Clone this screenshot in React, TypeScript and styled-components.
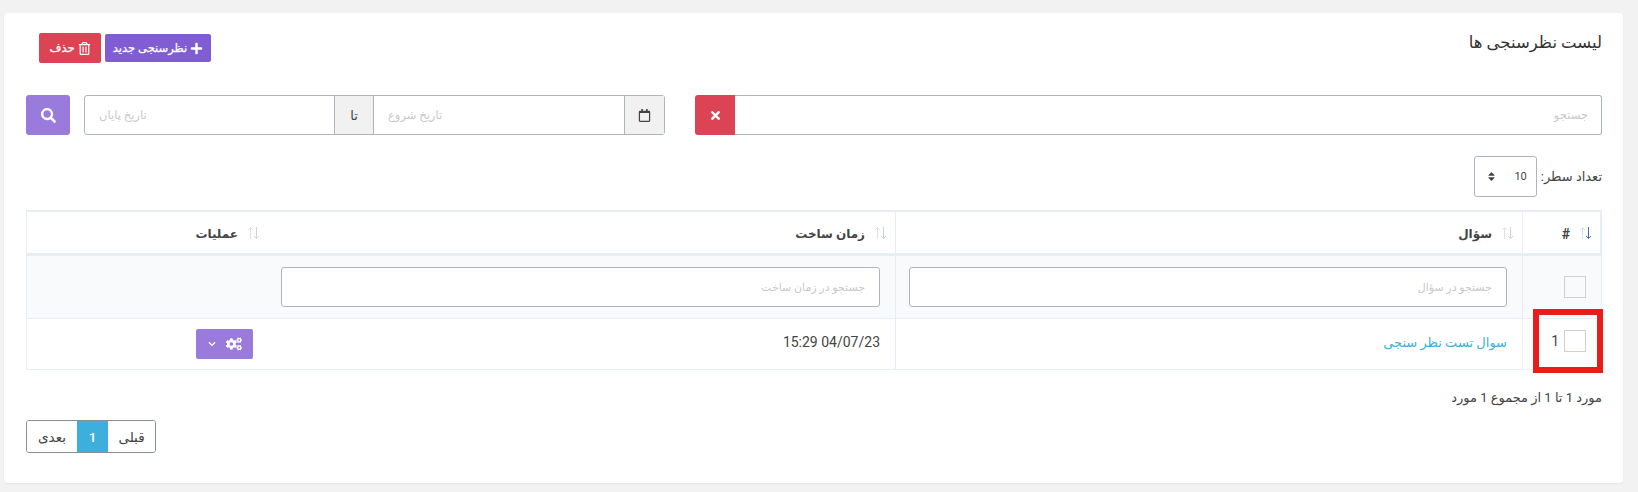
import React from "react";
import styled, { createGlobalStyle } from "styled-components";
import { FaPlus, FaRegTrashAlt, FaRegCalendar, FaSearch, FaTimes, FaCogs, FaChevronDown, FaSort } from "react-icons/fa";

const FONT = `Roboto, "DejaVu Sans", sans-serif`;

const Global = createGlobalStyle`
  html, body { margin: 0; padding: 0; background: #f2f2f2; }
  body { font-family: ${FONT}; color: #444; }
  * { box-sizing: border-box; }
  input::placeholder { color: #c9c9c9; opacity: 1; }
`;

const Page = styled.div`
  direction: rtl;
  height: 492px;
  padding: 13px 15px 0 4px;
`;
const Card = styled.main`
  background: #fff;
  height: 470px;
  border-radius: 4px;
  padding: 20px 21px 0 22px;
  box-shadow: 0 1px 2px rgba(0, 0, 0, 0.06);
`;
const TitleRow = styled.header`
  display: flex;
  align-items: center;
  justify-content: space-between;
  height: 30px;
  padding-left: 13px;
`;
const Title = styled.h1`
  margin: 0 0 12px;
  font-size: 16.5px;
  font-weight: 400;
  color: #333;
`;
const Actions = styled.div`
  display: flex;
  align-items: center;
  gap: 4px;
`;
const ActionButton = styled.button<{ $bg: string; $h: number; $w: number }>`
  display: inline-flex;
  align-items: center;
  justify-content: center;
  gap: 3px;
  height: ${(p) => p.$h}px;
  width: ${(p) => p.$w}px;
  padding: 0;
  background: ${(p) => p.$bg};
  border: none;
  border-radius: 2px;
  color: #fff;
  font: 400 11.5px ${FONT};
  -webkit-text-stroke: 0.25px #fff;
`;
const FilterRow = styled.section`
  display: flex;
  margin-top: 32px;
  gap: 14px;
`;
const SearchGroup = styled.div`
  display: flex;
  flex: 0 0 907px;
  height: 40px;
  margin-left: 16px;
`;
const SearchInput = styled.input`
  flex: 1;
  min-width: 0;
  height: 40px;
  padding: 0 13px;
  border: 1px solid #adb5bd;
  border-left: none;
  border-radius: 0 3px 3px 0;
  font: 400 11.5px ${FONT};
  background: #fff;
`;
const ClearButton = styled.button`
  flex: 0 0 40px;
  display: flex;
  align-items: center;
  justify-content: center;
  padding: 0;
  border: none;
  border-radius: 3px 0 0 3px;
  background: #dc4455;
  color: #fff;
  font-size: 13px;
`;
const DateGroup = styled.div`
  display: flex;
  flex: 0 0 581px;
  height: 40px;
  border: 1px solid #adb5bd;
  border-radius: 3px;
`;
const Addon = styled.span<{ $w: number }>`
  flex: 0 0 ${(p) => p.$w}px;
  display: flex;
  align-items: center;
  justify-content: center;
  background: #f1f1f1;
  color: #444;
  font-size: 13px;
  border-left: 1px solid #adb5bd;
`;
const DateInput = styled.input`
  flex: 1;
  min-width: 0;
  padding: 0 14px;
  border: none;
  border-left: 1px solid #adb5bd;
  font: 400 11.5px ${FONT};
  text-align: left;
  background: transparent;
  &:first-of-type { flex: 0 0 251px; }
  &:last-child { border-left: none; }
`;
const SearchButton = styled.button`
  flex: 0 0 44px;
  height: 40px;
  display: flex;
  align-items: center;
  justify-content: center;
  padding: 0;
  border: none;
  border-radius: 3px;
  background: #9a7bdb;
  color: #fff;
  font-size: 15px;
`;
const PerPage = styled.div`
  display: flex;
  align-items: center;
  gap: 4px;
  margin-top: 21px;
  height: 41px;
  font-size: 13px;
  color: #444;
`;
const SelectBox = styled.div`
  width: 63px;
  height: 41px;
  display: flex;
  align-items: center;
  justify-content: space-between;
  padding: 0 9px 0 11px;
  border: 1px solid #adb5bd;
  border-radius: 3px;
  font: 400 11px Roboto, sans-serif;
`;
const Table = styled.table`
  margin-top: 13px;
  width: 100%;
  table-layout: fixed;
  border-collapse: separate;
  border-spacing: 0;
`;
const Head = styled.th<{ $end?: boolean; $open?: boolean }>`
  height: 46px;
  padding: 3px 8px 0 0;
  border-top: 2px solid #e6edf4;
  border-bottom: 3px solid #e6edf4;
  border-right: ${(p) => (p.$end ? "2px solid #e6edf4" : "none")};
  border-left: ${(p) => (p.$open ? "none" : "1px solid #e6edf4")};
  text-align: right;
  font-size: 12px;
  font-weight: 700;
  color: #444;
  vertical-align: middle;
`;
const HeadInner = styled.span`
  display: inline-flex;
  align-items: center;
  gap: 9px;
  svg { margin-bottom: 3px; }
`;
const HashMark = styled.span`
  font-size: 14px;
`;
const FilterCell = styled.td<{ $end?: boolean; $open?: boolean }>`
  height: 63px;
  padding: 0 15px 0 13px;
  background: #f9fafc;
  border-bottom: 1px solid #e6edf4;
  border-right: ${(p) => (p.$end ? "1px solid #e6edf4" : "none")};
  border-left: ${(p) => (p.$open ? "none" : "1px solid #e6edf4")};
`;
const FilterInput = styled.input`
  display: block;
  width: 100%;
  height: 40px;
  padding: 0 14px;
  border: 1px solid #adb5bd;
  border-radius: 3px;
  background: #fff;
  font: 400 11px ${FONT};
`;
const Cell = styled.td<{ $end?: boolean; $open?: boolean; $lift?: number }>`
  position: relative;
  height: 51px;
  padding: 0 15px ${(p) => p.$lift ?? 0}px;
  border-bottom: 1px solid #e6edf4;
  border-right: ${(p) => (p.$end ? "1px solid #e6edf4" : "none")};
  border-left: ${(p) => (p.$open ? "none" : "1px solid #e6edf4")};
  font-size: 14px;
  color: #444;
`;
const CheckRow = styled.div`
  display: flex;
  align-items: center;
  gap: 5px;
`;
const Check = styled.span`
  flex: 0 0 22px;
  display: block;
  width: 22px;
  height: 22px;
  border: 1px solid #d3d0cb;
  background: transparent;
`;
const Marker = styled.span`
  position: absolute;
  top: -10px;
  right: -2px;
  width: 70px;
  height: 64px;
  border: 6px solid #e91c1c;
  pointer-events: none;
`;
const Link = styled.a`
  color: #3cafdc;
  font-size: 13px;
`;
const Time = styled.span`
  font: 400 14px Roboto, sans-serif;
  color: #444;
`;
const OpButton = styled.button`
  display: flex;
  align-items: center;
  justify-content: space-between;
  width: 57px;
  height: 30px;
  padding: 0 11px 0 12px;
  border: none;
  border-radius: 2px;
  background: #9a7bdb;
  color: #fff;
  font-size: 14px;
`;
const Info = styled.p`
  margin: 19px 0 0;
  height: 17px;
  line-height: 17px;
  font-size: 13px;
  color: #444;
`;
const Pager = styled.nav`
  display: flex;
  width: 130px;
  height: 33px;
  margin-top: 14px;
  margin-right: auto;
  border: 1px solid #868e96;
  border-radius: 3px;
  overflow: hidden;
`;
const PageItem = styled.span<{ $w: number; $active?: boolean }>`
  flex: ${(p) => (p.$w ? `0 0 ${p.$w}px` : "1")};
  display: flex;
  align-items: center;
  justify-content: center;
  font-size: 13.5px;
  font-weight: ${(p) => (p.$active ? 500 : 400)};
  background: ${(p) => (p.$active ? "#3cafdc" : "#fff")};
  color: ${(p) => (p.$active ? "#fff" : "#444")};
`;

const Sort = ({ active }: { active?: boolean }) => (
  <svg width="13" height="14" viewBox="0 0 13 14" fill="none" strokeWidth="1">
    <path d="M3.5 13V1.5M1 4l2.5-2.5L6 4" stroke={active ? "#cfe3f5" : "#dfe3e8"} />
    <path d="M9.5 1v11.5M7 10l2.5 2.5L12 10" stroke={active ? "#3d6fa8" : "#cfd4da"} />
  </svg>
);

export default function App() {
  return (
    <Page>
      <Global />
      <Card>
        <TitleRow>
          <Title>لیست نظرسنجی ها</Title>
          <Actions>
            <ActionButton $bg="#805dd3" $h={28} $w={106}>
              <FaPlus size={13} />
              نظرسنجی جدید
            </ActionButton>
            <ActionButton $bg="#dc4455" $h={30} $w={62}>
              <FaRegTrashAlt size={13} />
              حذف
            </ActionButton>
          </Actions>
        </TitleRow>
        <FilterRow>
          <SearchGroup>
            <SearchInput placeholder="جستجو" />
            <ClearButton aria-label="پاک کردن"><FaTimes /></ClearButton>
          </SearchGroup>
          <DateGroup>
            <Addon $w={40}><FaRegCalendar size={13} /></Addon>
            <DateInput placeholder="تاریخ شروع" />
            <Addon $w={39}>تا</Addon>
            <DateInput placeholder="تاریخ پایان" />
          </DateGroup>
          <SearchButton aria-label="جستجو"><FaSearch /></SearchButton>
        </FilterRow>
        <PerPage>
          تعداد سطر:
          <SelectBox>
            10
            <FaSort size={11} />
          </SelectBox>
        </PerPage>
        <Table>
          <colgroup>
            <col style={{ width: 80 }} />
            <col style={{ width: 627 }} />
            <col style={{ width: 627 }} />
            <col />
          </colgroup>
          <thead>
            <tr>
              <Head $end><HeadInner><Sort active /><HashMark>#</HashMark></HeadInner></Head>
              <Head><HeadInner><Sort />سؤال</HeadInner></Head>
              <Head $open><HeadInner><Sort />زمان ساخت</HeadInner></Head>
              <Head><HeadInner><Sort />عملیات</HeadInner></Head>
            </tr>
          </thead>
          <tbody>
            <tr>
              <FilterCell $end><Check /></FilterCell>
              <FilterCell><FilterInput placeholder="جستجو در سؤال" /></FilterCell>
              <FilterCell $open><FilterInput placeholder="جستجو در زمان ساخت" /></FilterCell>
              <FilterCell />
            </tr>
            <tr>
              <Cell $end $lift={7}>
                <CheckRow><Check />1</CheckRow>
                <Marker />
              </Cell>
              <Cell $lift={5}><Link>سوال تست نظر سنجی</Link></Cell>
              <Cell $open $lift={5}><Time>04/07/23 15:29</Time></Cell>
              <Cell>
                <OpButton aria-label="عملیات"><FaCogs size={16} /><FaChevronDown size={8} /></OpButton>
              </Cell>
            </tr>
          </tbody>
        </Table>
        <Info>مورد 1 تا 1 از مجموع 1 مورد</Info>
        <Pager>
          <PageItem $w={47}>قبلی</PageItem>
          <PageItem $w={31} $active>1</PageItem>
          <PageItem $w={0}>بعدی</PageItem>
        </Pager>
      </Card>
    </Page>
  );
}
